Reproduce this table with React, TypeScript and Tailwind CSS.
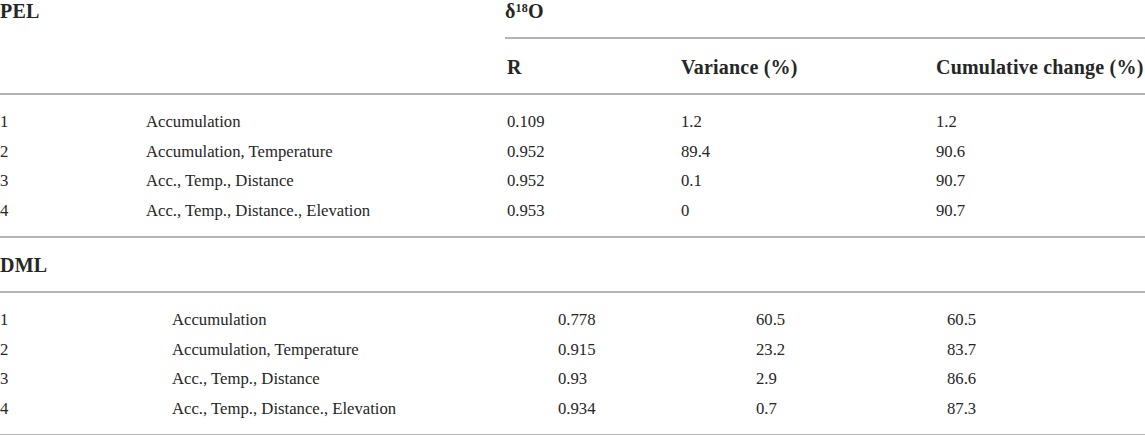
import React from 'react';

type Row = [string, string, string, string, string];

const pelRows: Row[] = [
  ['1', 'Accumulation', '0.109', '1.2', '1.2'],
  ['2', 'Accumulation, Temperature', '0.952', '89.4', '90.6'],
  ['3', 'Acc., Temp., Distance', '0.952', '0.1', '90.7'],
  ['4', 'Acc., Temp., Distance., Elevation', '0.953', '0', '90.7'],
];

const dmlRows: Row[] = [
  ['1', 'Accumulation', '0.778', '60.5', '60.5'],
  ['2', 'Accumulation, Temperature', '0.915', '23.2', '83.7'],
  ['3', 'Acc., Temp., Distance', '0.93', '2.9', '86.6'],
  ['4', 'Acc., Temp., Distance., Elevation', '0.934', '0.7', '87.3'],
];

const DataRows = ({ rows, cols }: { rows: Row[]; cols: string }) => (
  <div className="pt-[12px] pb-[11px] border-b-2 border-[#b4b4b4]">
    {rows.map((r) => (
      <div key={r[0]} className={`grid ${cols} h-[29.5px] items-center text-[16.7px] leading-[29.5px]`}>
        {r.map((c, i) => (
          <div key={i} className="whitespace-nowrap">{c}</div>
        ))}
      </div>
    ))}
  </div>
);

const App = () => {
  return (
    <div className="w-[1145px] h-[435px] bg-white text-[#262626] overflow-hidden font-['Liberation_Serif','Times_New_Roman',serif]">
      {/* PEL header */}
      <div className="grid grid-cols-[505px_1fr] text-[20px] font-bold leading-[22px] tracking-[0.2px] whitespace-nowrap">
        <div>PEL</div>
        <div className="pb-[15px] border-b-2 border-[#b4b4b4]">
          δ<sup className="text-[12px] font-bold">18</sup>O
        </div>
      </div>
      <div className="grid grid-cols-[505px_1fr] border-b-2 border-[#b4b4b4] text-[20px] font-bold leading-[22px] tracking-[0.2px] whitespace-nowrap pt-[17px] pb-[15px]">
        <div />
        <div className="grid grid-cols-[176px_255px_1fr]">
          <div className="pl-[2px]">R</div>
          <div>Variance (%)</div>
          <div>Cumulative change (%)</div>
        </div>
      </div>
      <DataRows rows={pelRows} cols="grid-cols-[146px_361px_174px_255px_1fr]" />

      {/* DML */}
      <div className="pt-[16px] pb-[15px] border-b-2 border-[#b4b4b4] text-[20px] font-bold leading-[22px] tracking-[0.2px]">DML</div>
      <DataRows rows={dmlRows} cols="grid-cols-[172px_386px_198px_191px_1fr]" />
    </div>
  );
};

export default App;
